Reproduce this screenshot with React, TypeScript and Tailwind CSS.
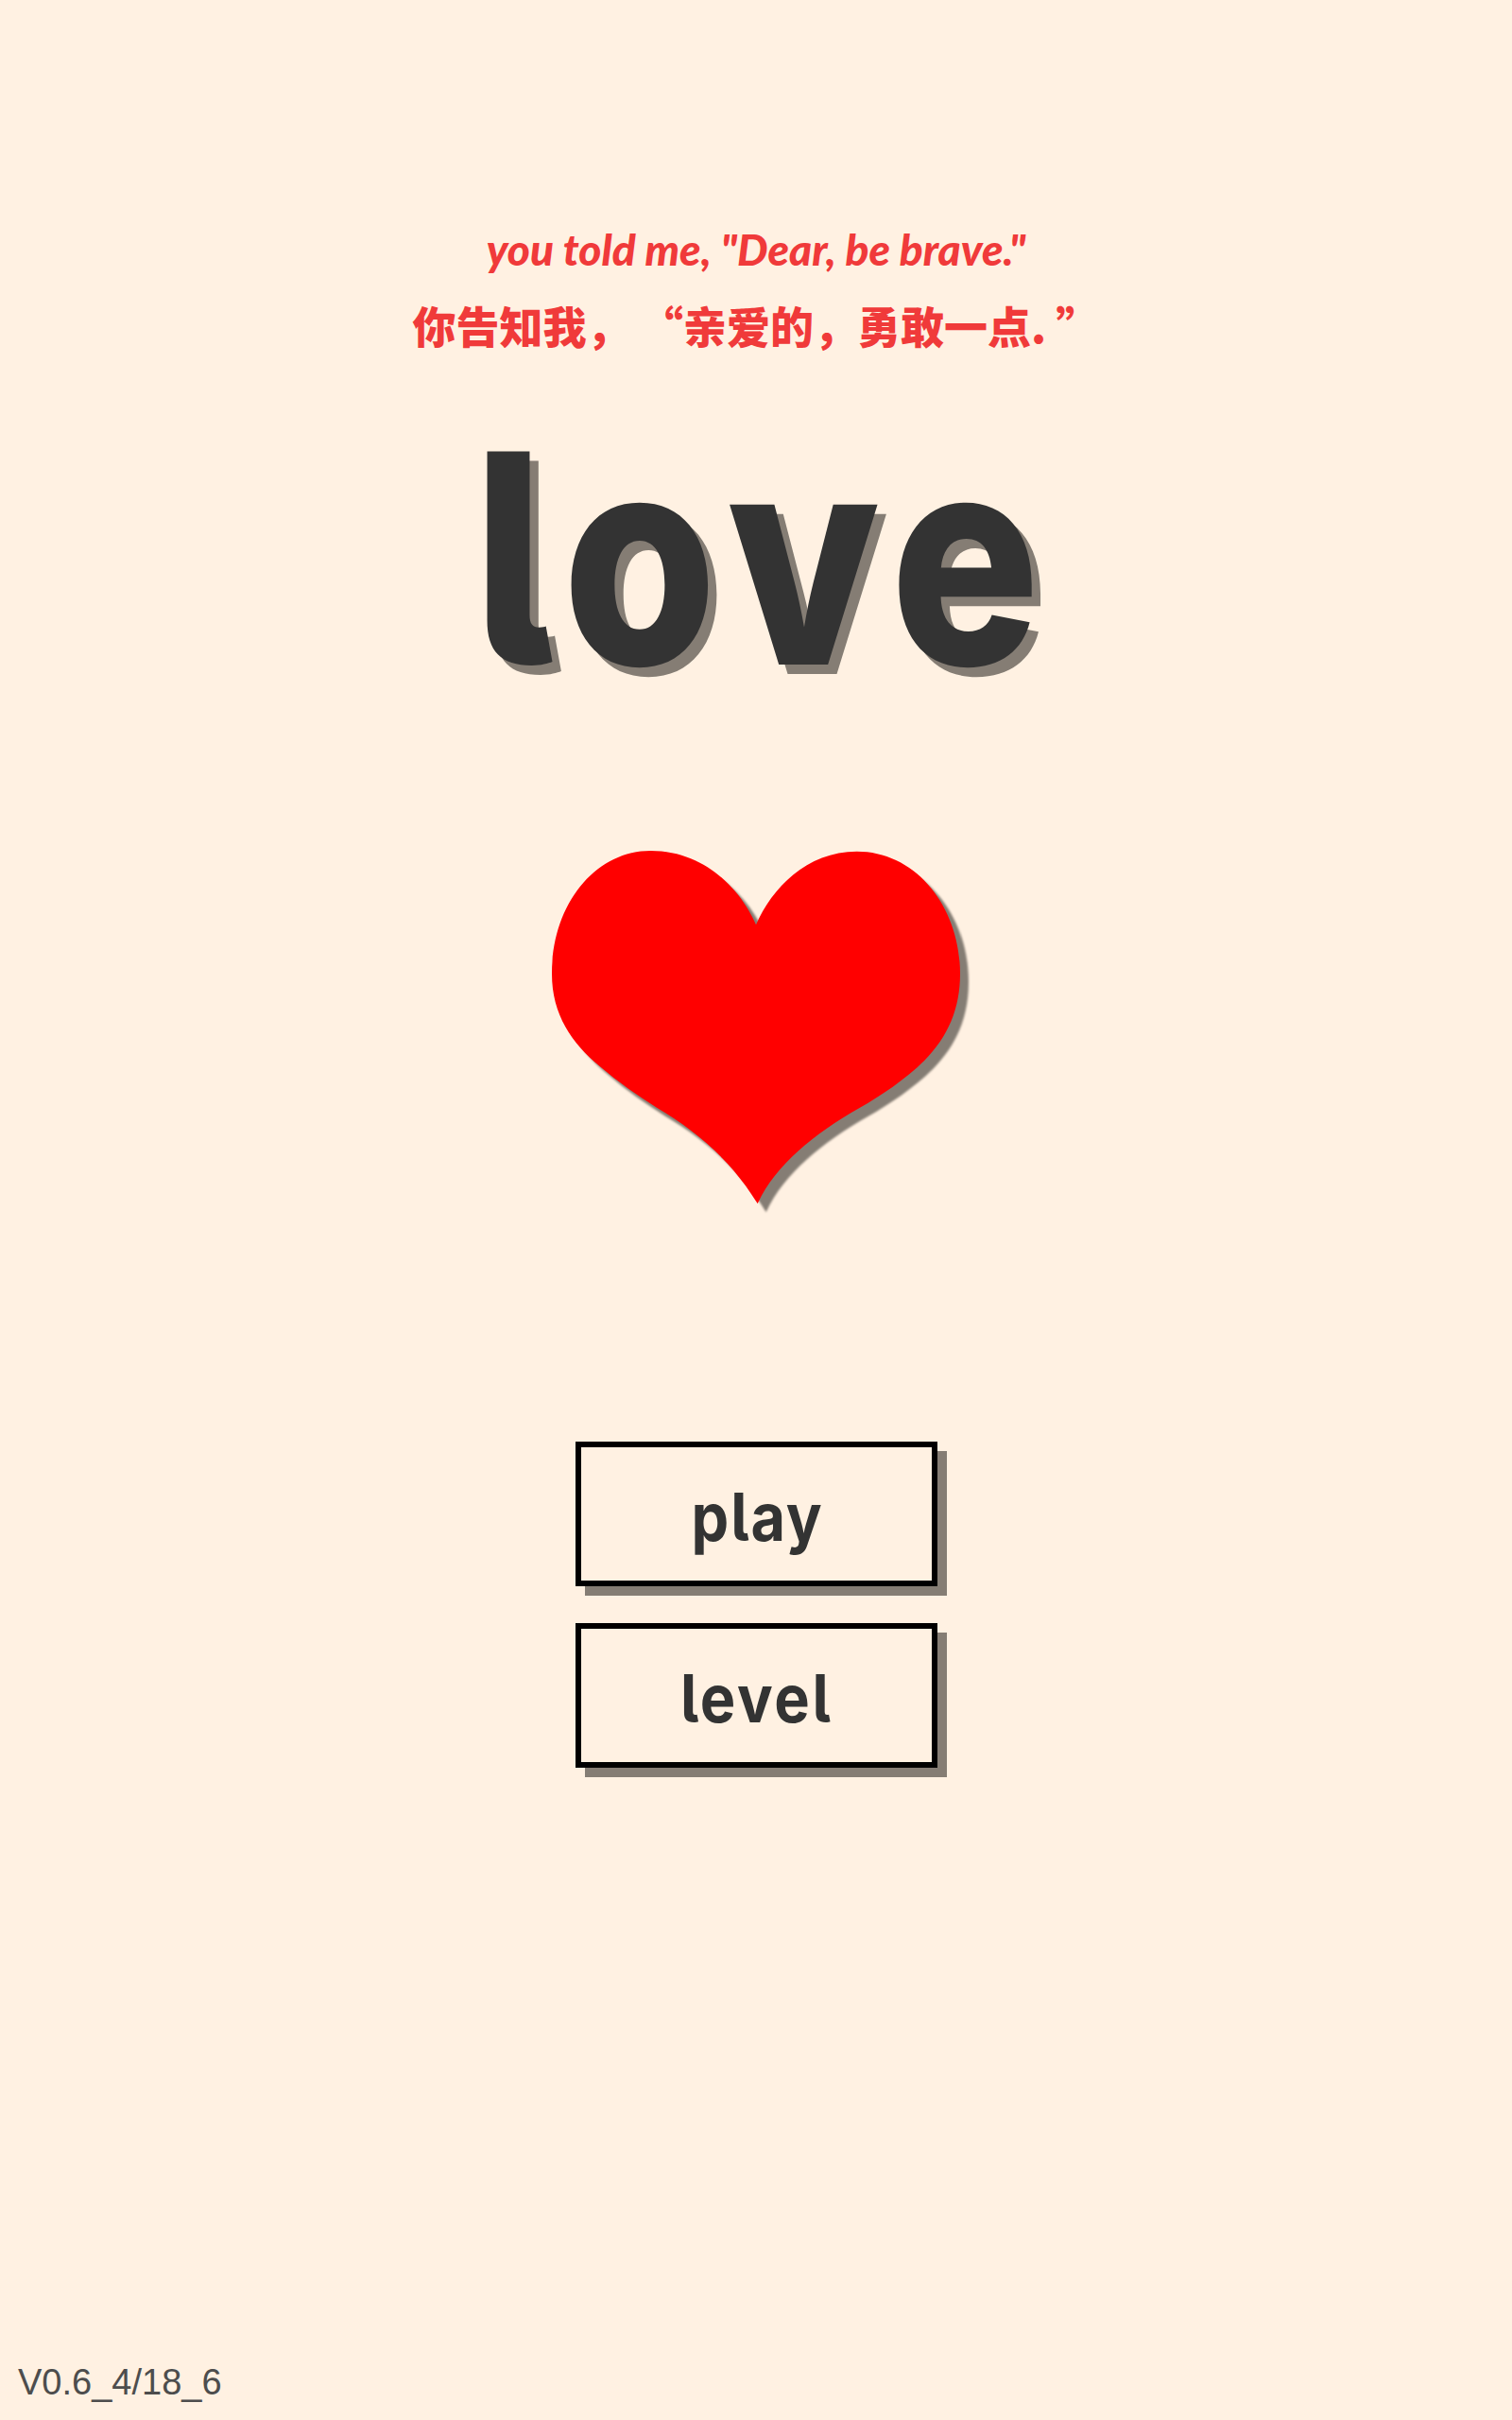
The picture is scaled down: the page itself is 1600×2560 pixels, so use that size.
export default function App() {
  const inter = "font-['Inter',sans-serif] [font-feature-settings:'cv05'] text-[#333333]";
  const shadowBtn = "flex h-[153px] w-[383px] items-center justify-center border-[6px] border-black pt-[6px] shadow-[10px_10px_0_#857d74]";
  return (
    <div className="flex h-[2560px] w-[1600px] flex-col items-center overflow-hidden bg-[#fff1e2]">
      <div className="mt-[223px] flex h-[80px] items-center font-['Lato','Noto_Sans_CJK_SC',sans-serif] text-[46px] font-black italic text-[#f03a3a]">
        you told me, "Dear, be brave."
      </div>
      <div className="flex h-[80px] items-center whitespace-pre font-['Noto_Sans_CJK_SC',sans-serif] text-[46px] font-black text-[#f03a3a]">
        你告知我， “亲爱的，勇敢一点. ”
      </div>
      <div className={`mt-[55px] flex h-[305px] scale-x-[0.85] items-center pl-[20px] text-[310px] font-extrabold leading-[305px] tracking-[18px] [text-shadow:11px_10px_0_#857d74] ${inter}`}>
        love
      </div>
      <svg viewBox="0 0 1440 1290" className="mt-[127px] h-[430px] w-[480px] overflow-visible [filter:drop-shadow(9px_9px_1px_#857d74)]">
        <path
          fill="#ff0000"
          d="M720 325 C680 230 570 90 385 90 C210 90 72 260 72 480 C72 610 135 700 225 775 C280 822 345 868 405 905 C525 975 640 1070 725 1210 C780 1090 900 990 1050 905 C1115 868 1195 815 1255 755 C1330 680 1368 590 1368 480 C1368 270 1230 92 1040 92 C880 92 770 210 720 325 Z"
        />
      </svg>
      <div className="mt-[225px] flex flex-col gap-[39px]">
        <div className={shadowBtn}>
          <span className={`scale-x-90 pl-[3px] text-[70px] font-bold leading-none tracking-[2px] ${inter}`}>play</span>
        </div>
        <div className={shadowBtn}>
          <span className={`scale-x-90 pl-[2px] text-[70px] font-bold leading-none tracking-[3px] ${inter}`}>level</span>
        </div>
      </div>
      <div className="mb-[18px] mt-auto self-start pl-[19px] font-['Liberation_Sans',sans-serif] text-[38px] leading-[44px] text-[#4d4d4d]">
        V0.6_4/18_6
      </div>
    </div>
  );
}
